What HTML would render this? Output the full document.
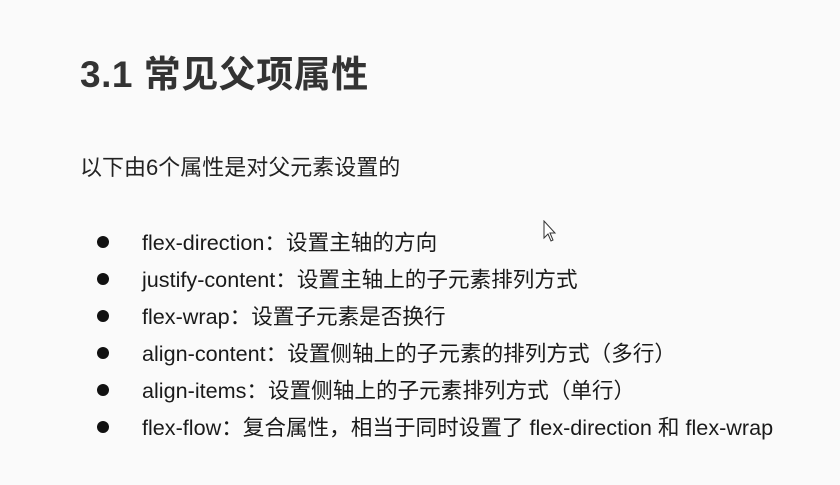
<!DOCTYPE html>
<html><head><meta charset="utf-8"><style>
body{margin:0;width:840px;height:485px;background:#fafafa;overflow:hidden;font-family:"Liberation Sans","Noto Sans CJK SC",sans-serif;color:#1e1e1e;position:relative}
.t{position:absolute;left:80px;top:44px;font-size:37px;font-weight:bold;color:#333;letter-spacing:0.5px}
.s{position:absolute;left:80px;top:150px;font-size:22px;color:#222}
.li{position:absolute;left:142px;font-size:21.6px;color:#1a1a1a;white-space:nowrap}
.b{position:absolute;left:97px;width:12px;height:12px;border-radius:50%;background:#111}
</style></head><body>
<div class="t">3.1 常见父项属性</div>
<div class="s">以下由6个属性是对父元素设置的</div>
<div class="b" style="top:236px"></div><div class="li" style="top:226px">flex-direction：设置主轴的方向</div>
<div class="b" style="top:273px"></div><div class="li" style="top:263px">justify-content：设置主轴上的子元素排列方式</div>
<div class="b" style="top:310px"></div><div class="li" style="top:300px">flex-wrap：设置子元素是否换行</div>
<div class="b" style="top:347px"></div><div class="li" style="top:337px">align-content：设置侧轴上的子元素的排列方式（多行）</div>
<div class="b" style="top:384px"></div><div class="li" style="top:374px">align-items：设置侧轴上的子元素排列方式（单行）</div>
<div class="b" style="top:421px"></div><div class="li" style="top:411px">flex-flow：复合属性，相当于同时设置了 flex-direction 和 flex-wrap</div>
<svg style="position:absolute;left:543px;top:220px" width="16" height="24" viewBox="0 0 16 24"><path d="M1 1 L1 18 L5 14 L8 21 L10 20 L7 13 L12 13 Z" fill="#fff" stroke="#333" stroke-width="1"/></svg>
</body></html>
